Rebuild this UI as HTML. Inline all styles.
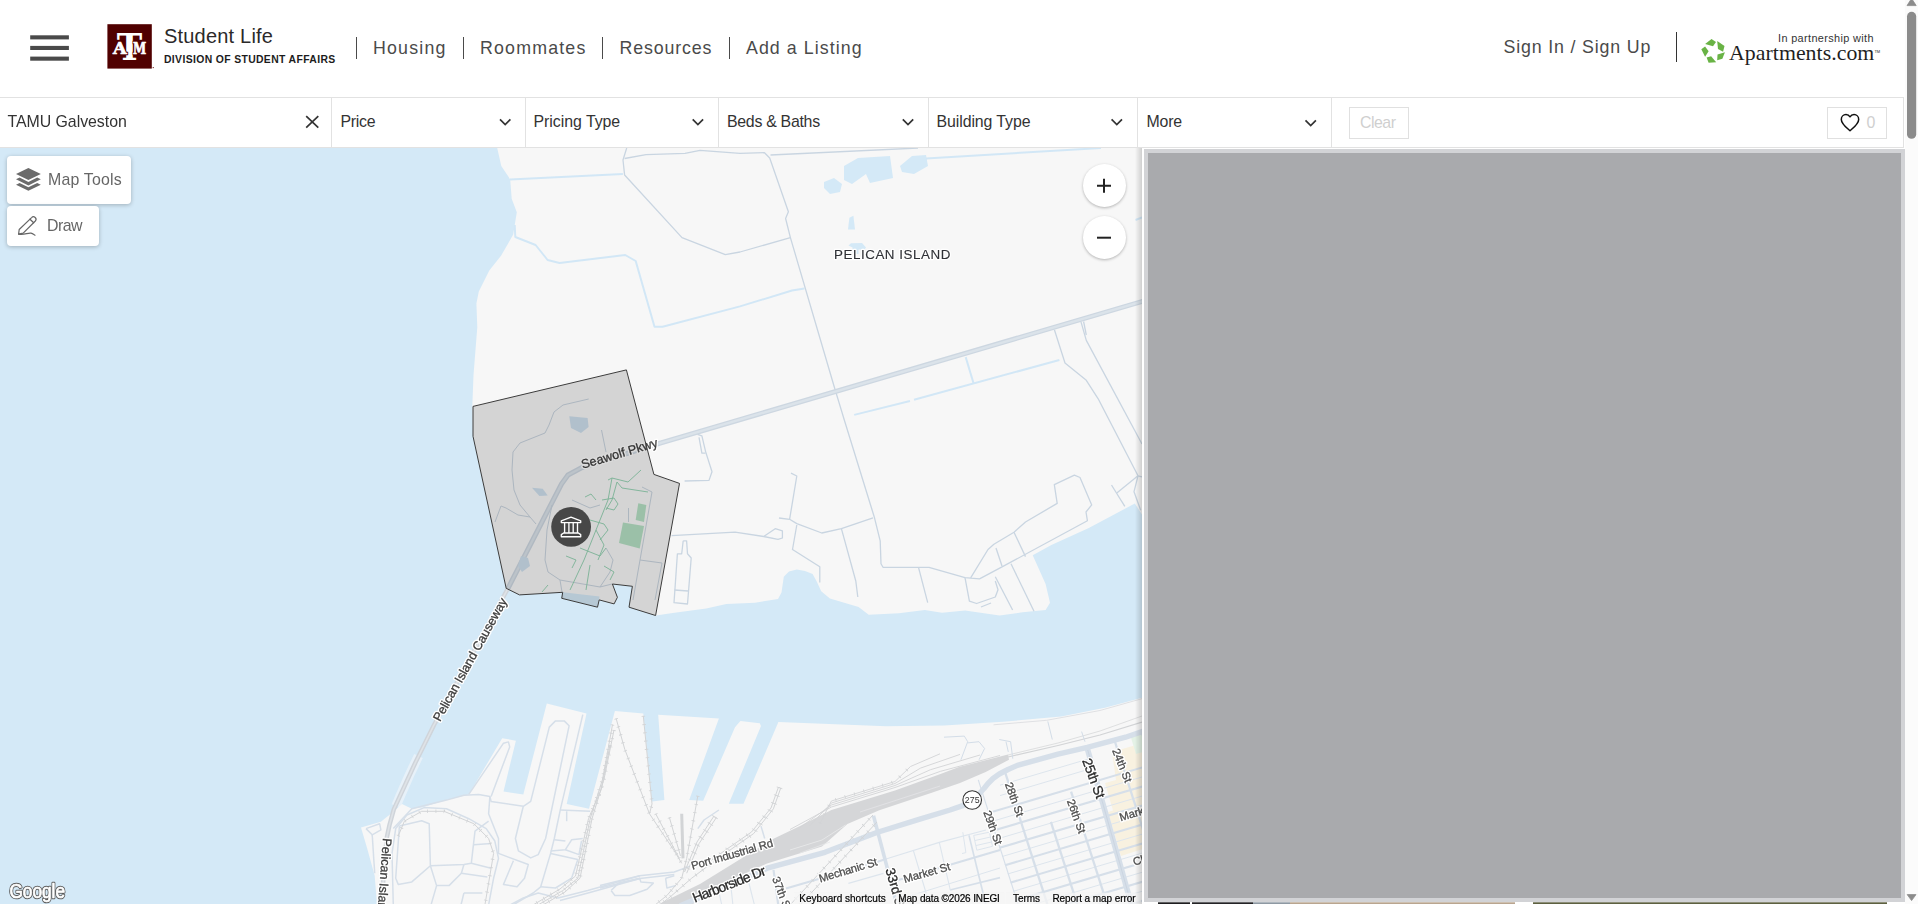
<!DOCTYPE html>
<html lang="en">
<head>
<meta charset="utf-8">
<title>Off Campus Housing - TAMU Galveston</title>
<style>
*{box-sizing:border-box;margin:0;padding:0}
html,body{width:1918px;height:904px;overflow:hidden;background:#fff;font-family:"Liberation Sans",Arial,sans-serif;color:#333}
#page{position:relative;width:1918px;height:904px;overflow:hidden;background:#fff}
.abs{position:absolute}
.t{position:absolute;white-space:nowrap;line-height:1}
/* header */
#hdrline{left:0;top:97px;width:1904px;height:1px;background:#e2e2e2}
#sl{left:164px;top:26.1px;font-size:20px;color:#2b2929;letter-spacing:0.2px}
#dsa{left:164px;top:54.8px;font-size:10.4px;color:#1c1c1c;font-weight:bold;letter-spacing:0.36px}
.nav{top:40.1px;font-size:17.8px;color:#4a4a4a}
.vsep{top:37px;width:1px;height:22px;background:#4a4a4a}
/* filter bar */
#fline{left:0;top:147px;width:1904px;height:1px;background:#e2e2e2}
.fsep{top:98px;width:1px;height:49px;background:#e2e2e2}
.flab{top:113.6px;font-size:15.9px;color:#333}
.fbtn{top:107px;height:32px;border:1px solid #e0e0e0;background:#fff}
/* map */
#map{left:0;top:148px;width:1142px;height:756px;background:#d4e9f7;overflow:hidden}
#map svg{will-change:transform}
#mapshade{left:1135px;top:148px;width:7px;height:756px;background:linear-gradient(to right,rgba(0,0,0,0),rgba(0,0,0,0.16))}
#panel{left:1144px;top:149px;width:761px;height:753px;background:#a9aaad;border:4px solid #d2d3d6}
#sb{left:1905px;top:0;width:13px;height:904px;background:#fbfbfb}
.mbtn{background:#fff;border-radius:4px;box-shadow:0 1px 4px rgba(0,0,0,.25)}
.mtxt{font-size:15.9px;color:#666;will-change:transform}
.zbtn{width:43px;height:43px;border-radius:50%;background:#fff;box-shadow:0 1px 3px rgba(0,0,0,.28)}
</style>
</head>
<body>
<div id="page">
<div id="map" class="abs">
<svg width="1142" height="756" viewBox="0 148 1142 756" style="position:absolute;left:0;top:0;display:block" font-family="'Liberation Sans',Arial,sans-serif">
<rect x="0" y="148" width="1142" height="756" fill="#d4e9f7"/>
<path d="M497.0,147.0 L501.3,166.0 L510.2,179.4 L511.7,198.8 L516.8,212.2 L513.2,234.6 L501.2,255.6 L489.3,270.5 L478.8,291.4 L476.4,303.4 L477.3,327.3 L473.5,375.0 L472.3,406.4 L473.0,436.3 L506.2,588.3 L519.5,594.9 L562.7,592.3 L561.7,598.3 L597.5,607.2 L599.2,599.9 L614.1,603.9 L617.4,597.3 L612.4,584.0 L632.4,586.3 L629.0,607.2 L655.8,615.6 L674.5,612.8 L706.2,608.4 L726.3,604.1 L755.0,602.7 L778.0,599.0 L781.5,592.6 L783.8,576.8 L789.0,571.5 L796.8,569.6 L805.0,571.0 L812.6,573.9 L817.0,582.0 L821.2,591.2 L829.9,598.4 L858.6,607.0 L868.7,614.8 L898.9,613.3 L924.8,609.9 L942.0,612.7 L965.0,610.4 L999.6,615.6 L1022.6,612.2 L1045.6,609.9 L1050.0,602.7 L1045.6,584.0 L1032.7,555.2 L1051.4,545.1 L1088.8,527.9 L1134.8,503.4 L1143.0,516.0 L1143.0,147.0Z" fill="#f7f7f7"/>
<path d="M418.5,756.0 L409.0,776.0 L400.2,796.0 L396.0,806.0" fill="none" stroke="#e7f1f9" stroke-width="9.5"/>
<path d="M361.0,827.4 L380.9,821.7 L393.0,812.0 L402.0,803.9 L411.8,808.8 L421.7,807.6 L446.5,800.1 L468.8,794.4 L502.2,738.2 L515.9,740.7 L503.5,791.5 L523.3,794.4 L546.8,703.5 L586.5,713.4 L566.7,803.9 L589.0,808.8 L614.9,711.0 L643.3,713.4 L652.0,801.4 L664.4,800.1 L658.2,714.7 L718.9,718.4 L689.2,800.1 L703.2,800.7 L735.0,727.2 L740.4,721.0 L759.8,723.3 L761.0,725.9 L728.8,803.8 L743.5,803.8 L778.4,722.1 L886.0,726.2 L944.4,725.6 L1002.9,721.8 L1061.3,716.5 L1105.0,707.8 L1143.0,697.5 L1143.0,905.0 L377.0,905.0 L374.7,875.7 L367.2,848.4Z" fill="#f7f7f7"/>
<path d="M844.0,166.0 L858.0,158.0 L890.0,156.0 L893.0,178.0 L870.0,183.0 L866.0,174.0 L852.0,184.0 L844.0,180.0Z" fill="#d4e9f7"/>
<path d="M824.0,182.0 L834.0,178.0 L842.0,184.0 L840.0,192.0 L830.0,194.0 L824.0,188.0Z" fill="#d4e9f7"/>
<path d="M900.0,166.0 L912.0,156.0 L926.0,155.0 L928.0,166.0 L914.0,174.0 L902.0,172.0Z" fill="#d4e9f7"/>
<path d="M849.4,217.7 L853.4,215.7 L855.0,229.6 L848.0,229.6Z" fill="#d4e9f7"/>
<path d="M848.5,245.5 L851.0,243.3 L862.0,243.0 L866.0,247.5 L864.5,249.5 L858.5,249.5 L858.5,254.0 L853.0,254.0 L852.5,247.5Z" fill="#d4e9f7"/>
<path d="M510.0,179.4 L622.9,174.0" fill="none" stroke="#d2e7f6" stroke-width="2" stroke-linejoin="round"/>
<path d="M514.7,225.0 L515.3,237.0 L535.6,245.0 L547.6,260.0 L559.5,263.0 L625.2,255.0 L635.7,261.0 L654.5,326.7 L662.6,326.7 L740.0,306.4 L792.0,290.5 L804.4,288.6" fill="none" stroke="#d2e7f6" stroke-width="2" stroke-linejoin="round"/>
<path d="M854.2,414.9 L910.0,401.0" fill="none" stroke="#d2e7f6" stroke-width="2" stroke-linejoin="round"/>
<path d="M914.0,399.8 L1059.4,360.0" fill="none" stroke="#d2e7f6" stroke-width="2" stroke-linejoin="round"/>
<path d="M965.7,357.1 L973.7,383.8" fill="none" stroke="#d2e7f6" stroke-width="2" stroke-linejoin="round"/>
<path d="M926.0,158.5 L1101.0,148.0" fill="none" stroke="#d2e7f6" stroke-width="2" stroke-linejoin="round"/>
<path d="M1135.5,220.0 L1142.0,217.5" fill="none" stroke="#d2e7f6" stroke-width="2" stroke-linejoin="round"/>
<path d="M626.7,148.0 L623.0,160.0 L624.6,175.0 L682.0,237.6 L725.3,254.7 L740.0,252.0 L790.4,237.6" fill="none" stroke="#c9d5e1" stroke-width="1.3" stroke-linejoin="round"/>
<path d="M624.6,158.5 L646.0,154.6 L685.0,153.4 L700.0,150.4 L740.0,153.4 L764.5,152.7 L769.7,158.0 L788.4,211.7 L785.6,218.5 L790.4,237.6 L834.3,387.0 L844.3,420.0 L874.5,517.8 L880.2,540.8 L881.0,563.8 L883.0,567.3 L929.0,567.3 L965.0,577.7 L979.5,578.8 L1002.5,566.7 L1087.4,520.7 L1086.0,512.0 L1091.7,504.9 L1080.0,477.5 L1074.4,475.2 L1054.3,484.7 L1057.2,503.4 L1025.5,522.0 L1014.0,532.2 L993.9,544.3 L988.0,549.5 L970.8,577.7" fill="none" stroke="#c9d5e1" stroke-width="1.3" stroke-linejoin="round"/>
<path d="M770.5,155.0 L918.0,148.0" fill="none" stroke="#c9d5e1" stroke-width="1.3" stroke-linejoin="round"/>
<path d="M873.0,517.8 L841.4,528.7 L821.8,533.0 L796.8,523.6 L789.6,519.3 L796.8,476.0 L791.0,473.2" fill="none" stroke="#c9d5e1" stroke-width="1.3" stroke-linejoin="round"/>
<path d="M779.0,518.0 L789.6,519.3" fill="none" stroke="#c9d5e1" stroke-width="1.3" stroke-linejoin="round"/>
<path d="M796.8,525.0 L792.5,549.5 L819.8,566.7 L819.8,582.5" fill="none" stroke="#c9d5e1" stroke-width="1.3" stroke-linejoin="round"/>
<path d="M841.4,528.7 L855.8,581.0 L857.8,597.0" fill="none" stroke="#c9d5e1" stroke-width="1.3" stroke-linejoin="round"/>
<path d="M918.5,567.3 L927.7,602.7" fill="none" stroke="#c9d5e1" stroke-width="1.3" stroke-linejoin="round"/>
<path d="M671.6,535.6 L735.0,532.2 L763.7,536.5 L775.2,528.7 L782.4,530.8 L782.4,538.0 L778.0,539.4 L763.7,536.5" fill="none" stroke="#c9d5e1" stroke-width="1.3" stroke-linejoin="round"/>
<path d="M697.5,434.4 L701.9,435.8 L705.6,451.6 L712.0,471.8 L709.0,480.4 L684.6,481.0" fill="none" stroke="#c9d5e1" stroke-width="1.3" stroke-linejoin="round"/>
<path d="M699.0,437.3 L701.9,453.1 L705.6,453.1" fill="none" stroke="#c9d5e1" stroke-width="1.3" stroke-linejoin="round"/>
<path d="M683.2,540.8 L686.6,540.8 L687.5,553.8 L691.2,558.0 L687.5,604.0 L674.0,602.7 L677.4,553.8 L681.7,553.8 L683.2,540.8" fill="none" stroke="#c9d5e1" stroke-width="1.3" stroke-linejoin="round"/>
<path d="M674.5,590.0 L688.0,591.0" fill="none" stroke="#c9d5e1" stroke-width="1.3" stroke-linejoin="round"/>
<path d="M1054.4,329.8 L1065.0,363.0 L1086.3,380.3 L1098.2,398.8 L1138.0,475.8" fill="none" stroke="#c9d5e1" stroke-width="1.3" stroke-linejoin="round"/>
<path d="M1081.0,321.9 L1086.3,340.4 L1142.0,444.0" fill="none" stroke="#c9d5e1" stroke-width="1.3" stroke-linejoin="round"/>
<path d="M1083.6,321.5 L1086.3,335.0" fill="none" stroke="#c9d5e1" stroke-width="1.3" stroke-linejoin="round"/>
<path d="M1138.0,475.8 L1134.0,491.7 L1140.7,510.3" fill="none" stroke="#c9d5e1" stroke-width="1.3" stroke-linejoin="round"/>
<path d="M1138.0,475.8 L1116.8,493.0" fill="none" stroke="#c9d5e1" stroke-width="1.3" stroke-linejoin="round"/>
<path d="M1111.5,485.0 L1124.8,506.3" fill="none" stroke="#c9d5e1" stroke-width="1.3" stroke-linejoin="round"/>
<path d="M1138.0,475.8 L1142.0,477.0" fill="none" stroke="#c9d5e1" stroke-width="1.3" stroke-linejoin="round"/>
<path d="M965.0,577.7 L969.4,601.2 L976.6,603.5 L995.3,597.0 L998.0,589.7 L995.3,581.0" fill="none" stroke="#c9d5e1" stroke-width="1.3" stroke-linejoin="round"/>
<path d="M981.0,607.0 L991.0,603.0" fill="none" stroke="#c9d5e1" stroke-width="1.3" stroke-linejoin="round"/>
<path d="M1011.0,563.8 L1034.0,611.3" fill="none" stroke="#c9d5e1" stroke-width="1.3" stroke-linejoin="round"/>
<path d="M995.3,576.8 L1012.6,610.0" fill="none" stroke="#c9d5e1" stroke-width="1.3" stroke-linejoin="round"/>
<path d="M1014.0,532.2 L1025.5,556.6" fill="none" stroke="#c9d5e1" stroke-width="1.3" stroke-linejoin="round"/>
<path d="M996.0,548.0 L1002.0,566.0" fill="none" stroke="#c9d5e1" stroke-width="1.3" stroke-linejoin="round"/>
<path d="M508.0,588.3 L543.0,520.0 L561.5,484.0 L568.0,475.0 L582.0,467.5 L661.0,442.8 L1143.0,301.2" fill="none" stroke="#cdd7e1" stroke-width="5" stroke-linejoin="round"/>
<path d="M508.0,588.3 L543.0,520.0 L561.5,484.0 L568.0,475.0 L582.0,467.5 L661.0,442.8 L1143.0,301.2" fill="none" stroke="#dbe3ea" stroke-width="2.4" stroke-linejoin="round"/>
<path d="M508.0,588.3 L433.9,725.2 L415.3,762.8 L393.8,809.4 L389.5,825.0 L386.7,838.0 L383.5,875.0 L382.0,905.0" fill="none" stroke="#cfd4da" stroke-width="4.5" stroke-linejoin="round"/>
<path d="M508.0,588.3 L433.9,725.2 L415.3,762.8 L393.8,809.4 L389.5,825.0 L386.7,838.0 L383.5,875.0 L382.0,905.0" fill="none" stroke="#dfe3e7" stroke-width="1.6" stroke-linejoin="round"/>
<defs><clipPath id="gridclip"><path d="M977.7,780.0 L999.3,774.0 L1008.0,769.5 L1017.3,765.4 L1058.0,754.2 L1087.3,747.4 L1125.6,737.2 L1144.0,731.0 L1144.0,906.0 L1018.0,906.0Z"/></clipPath><clipPath id="southclip"><path d="M679.8,906.0 L722.0,888.0 L767.3,868.2 L825.0,852.3 L876.8,832.5 L919.0,819.3 L950.0,810.0 L962.8,805.6 L972.0,800.0 L979.0,794.0 L984.0,788.5 L988.0,783.5 L993.0,778.5 L999.3,774.0 L1008.0,769.5 L1017.3,765.4 L1058.0,754.2 L1087.3,747.4 L1125.6,737.2 L1144.0,731.0 L1144.0,906.0Z"/></clipPath></defs>
<g clip-path="url(#gridclip)">
<path d="M1112,752 L1143,743 L1143,849 L1121,856 L1108,812 L1113,810.5 L1105,783 L1116,780 Z" fill="#f8f1e0"/>
<path d="M1128,728 L1143,723 L1143,752 L1136,754 Z" fill="#e4f2e6"/>
<path d="M960.0,821.4 L1143.0,767.2" fill="none" stroke="#d6dfe9" stroke-width="2.1" stroke-linejoin="round" stroke-linecap="butt" />
<path d="M960.0,830.9 L1143.0,776.7" fill="none" stroke="#dde5ed" stroke-width="1" stroke-linejoin="round" stroke-linecap="butt" />
<path d="M960.0,840.5 L1143.0,786.3" fill="none" stroke="#d6dfe9" stroke-width="2.1" stroke-linejoin="round" stroke-linecap="butt" />
<path d="M960.0,850.0 L1143.0,795.8" fill="none" stroke="#dde5ed" stroke-width="1" stroke-linejoin="round" stroke-linecap="butt" />
<path d="M960.0,859.5 L1143.0,805.3" fill="none" stroke="#d6dfe9" stroke-width="2.1" stroke-linejoin="round" stroke-linecap="butt" />
<path d="M960.0,869.0 L1143.0,814.8" fill="none" stroke="#dde5ed" stroke-width="1" stroke-linejoin="round" stroke-linecap="butt" />
<path d="M960.0,878.6 L1143.0,824.4" fill="none" stroke="#d6dfe9" stroke-width="2.1" stroke-linejoin="round" stroke-linecap="butt" />
<path d="M960.0,888.1 L1143.0,833.9" fill="none" stroke="#dde5ed" stroke-width="1" stroke-linejoin="round" stroke-linecap="butt" />
<path d="M960.0,897.6 L1143.0,843.4" fill="none" stroke="#d6dfe9" stroke-width="2.1" stroke-linejoin="round" stroke-linecap="butt" />
<path d="M960.0,907.1 L1143.0,852.9" fill="none" stroke="#dde5ed" stroke-width="1" stroke-linejoin="round" stroke-linecap="butt" />
<path d="M960.0,916.7 L1143.0,862.5" fill="none" stroke="#d6dfe9" stroke-width="2.1" stroke-linejoin="round" stroke-linecap="butt" />
<path d="M960.0,926.2 L1143.0,872.0" fill="none" stroke="#dde5ed" stroke-width="1" stroke-linejoin="round" stroke-linecap="butt" />
<path d="M960.0,935.7 L1143.0,881.5" fill="none" stroke="#d6dfe9" stroke-width="2.1" stroke-linejoin="round" stroke-linecap="butt" />
<path d="M960.0,945.2 L1143.0,891.0" fill="none" stroke="#dde5ed" stroke-width="1" stroke-linejoin="round" stroke-linecap="butt" />
<path d="M960.0,954.8 L1143.0,900.6" fill="none" stroke="#d6dfe9" stroke-width="2.1" stroke-linejoin="round" stroke-linecap="butt" />
<path d="M960.0,964.3 L1143.0,910.1" fill="none" stroke="#dde5ed" stroke-width="1" stroke-linejoin="round" stroke-linecap="butt" />
<path d="M960.0,973.8 L1143.0,919.6" fill="none" stroke="#d6dfe9" stroke-width="2.1" stroke-linejoin="round" stroke-linecap="butt" />
<path d="M960.0,983.3 L1143.0,929.1" fill="none" stroke="#dde5ed" stroke-width="1" stroke-linejoin="round" stroke-linecap="butt" />
<path d="M1000.0,785.2 L1090.0,758.5" fill="none" stroke="#dde5ed" stroke-width="1" stroke-linejoin="round" stroke-linecap="butt" />
<path d="M1000.0,795.6 L1090.0,768.9" fill="none" stroke="#dde5ed" stroke-width="1" stroke-linejoin="round" stroke-linecap="butt" />
<path d="M1161.4,700.0 L1228.6,910.0" fill="none" stroke="#d6dfe9" stroke-width="2.3" stroke-linejoin="round" stroke-linecap="butt" />
<path d="M1131.5,700.0 L1198.7,910.0" fill="none" stroke="#d6dfe9" stroke-width="2.3" stroke-linejoin="round" stroke-linecap="butt" />
<path d="M1101.6,700.0 L1168.8,910.0" fill="none" stroke="#d6dfe9" stroke-width="2.3" stroke-linejoin="round" stroke-linecap="butt" />
<path d="M1071.1,791.6 L1109.0,910.0" fill="none" stroke="#d6dfe9" stroke-width="2.3" stroke-linejoin="round" stroke-linecap="butt" />
<path d="M1050.9,821.8 L1079.1,910.0" fill="none" stroke="#d6dfe9" stroke-width="2.3" stroke-linejoin="round" stroke-linecap="butt" />
<path d="M982.0,700.0 L1049.2,910.0" fill="none" stroke="#d6dfe9" stroke-width="2.3" stroke-linejoin="round" stroke-linecap="butt" />
<path d="M952.1,700.0 L1019.3,910.0" fill="none" stroke="#d6dfe9" stroke-width="2.3" stroke-linejoin="round" stroke-linecap="butt" />
</g>
<g clip-path="url(#southclip)">
<path d="M786.0,888.5 L876.8,862.0 L886.0,859.0" fill="none" stroke="#d6dfe9" stroke-width="2.1" stroke-linejoin="round" stroke-linecap="butt" />
<path d="M886.0,859.0 L939.3,842.4 L986.0,830.0" fill="none" stroke="#dde5ed" stroke-width="1.1" stroke-linejoin="round" stroke-linecap="butt" />
<path d="M898.4,880.0 L1000.0,849.9" fill="none" stroke="#d6dfe9" stroke-width="2.1" stroke-linejoin="round" stroke-linecap="butt" />
<path d="M848.4,883.4 L883.4,873.4" fill="none" stroke="#dde5ed" stroke-width="1.1" stroke-linejoin="round" stroke-linecap="butt" />
<path d="M950.0,890.0 L1000.0,877.6" fill="none" stroke="#d6dfe9" stroke-width="1.6" stroke-linejoin="round" stroke-linecap="butt" />
<path d="M900.0,899.0 L1000.0,868.0" fill="none" stroke="#dde5ed" stroke-width="1" stroke-linejoin="round" stroke-linecap="butt" />
<path d="M773.5,869.8 L778.4,906.0" fill="none" stroke="#d6dfe9" stroke-width="2.2" stroke-linejoin="round" stroke-linecap="butt" />
<path d="M748.5,881.5 L754.7,906.0" fill="none" stroke="#dde5ed" stroke-width="1.1" stroke-linejoin="round" stroke-linecap="butt" />
<path d="M718.8,891.7 L722.0,906.0" fill="none" stroke="#dde5ed" stroke-width="1.1" stroke-linejoin="round" stroke-linecap="butt" />
<path d="M731.3,890.0 L733.0,906.0" fill="none" stroke="#dde5ed" stroke-width="1.1" stroke-linejoin="round" stroke-linecap="butt" />
<path d="M913.5,851.0 L925.2,890.0 L930.0,906.0" fill="none" stroke="#dde5ed" stroke-width="1.1" stroke-linejoin="round" stroke-linecap="butt" />
<path d="M939.3,842.4 L950.3,890.0" fill="none" stroke="#dde5ed" stroke-width="1.1" stroke-linejoin="round" stroke-linecap="butt" />
<path d="M969.0,835.4 L986.2,906.0" fill="none" stroke="#d6dfe9" stroke-width="1.7" stroke-linejoin="round" stroke-linecap="butt" />
<path d="M962.8,832.2 L965.9,852.6 L962.0,853.5" fill="none" stroke="#dde5ed" stroke-width="1" stroke-linejoin="round" stroke-linecap="butt" />
<path d="M973.7,835.4 L989.4,832.2 L992.5,846.3 L976.8,850.2 L973.7,835.4" fill="none" stroke="#dde5ed" stroke-width="1" stroke-linejoin="round" stroke-linecap="butt" />
<path d="M975.0,840.5 L990.5,837.0" fill="none" stroke="#dde5ed" stroke-width="1" stroke-linejoin="round" stroke-linecap="butt" />
<path d="M976.0,845.5 L991.5,842.0" fill="none" stroke="#dde5ed" stroke-width="1" stroke-linejoin="round" stroke-linecap="butt" />
</g>
<path d="M1087.3,748.5 L1131.5,905.0" fill="none" stroke="#d6dfe9" stroke-width="5.6" stroke-linejoin="round" stroke-linecap="butt" />
<path d="M1087.3,748.5 L1131.5,905.0" fill="none" stroke="#c5d0dc" stroke-width="0.7" stroke-linejoin="round" stroke-linecap="butt" />
<path d="M873.5,815.7 L897.0,905.0" fill="none" stroke="#d6dfe9" stroke-width="3.6" stroke-linejoin="round" stroke-linecap="butt" />
<path d="M655.0,906.0 L700.0,884.0 L773.0,839.0 L800.0,826.0 L831.4,810.0 L895.0,790.5 L940.5,774.0 L959.0,767.0 L1008.0,754.5 L1009.0,759.8 L985.7,772.0 L960.0,783.0 L932.5,792.5 L879.3,810.3 L847.4,824.0 L822.0,846.5 L767.0,863.5 L722.0,884.0 L690.0,906.0Z" fill="#d5d6d8"/>
<path d="M790.0,829.5 L831.4,807.0 L895.0,787.5 L940.5,771.3 L1000.0,755.5" fill="none" stroke="#d2d4d6" stroke-width="0.9" stroke-linejoin="round" stroke-linecap="butt" />
<path d="M800.0,827.5 L831.4,805.0 L895.0,785.5 L930.5,769.7 L980.0,755.0" fill="none" stroke="#d2d4d6" stroke-width="0.9" stroke-linejoin="round" stroke-linecap="butt" />
<path d="M810.0,825.5 L831.4,803.0 L895.0,783.5 L920.5,768.1 L960.0,754.4" fill="none" stroke="#d2d4d6" stroke-width="0.9" stroke-linejoin="round" stroke-linecap="butt" />
<path d="M820.0,823.5 L831.4,801.0 L895.0,781.5 L910.5,766.5 L940.0,753.8" fill="none" stroke="#d2d4d6" stroke-width="0.9" stroke-linejoin="round" stroke-linecap="butt" />
<path d="M820.0,823.5 L831.4,801.0 L895.0,781.5 L910.5,766.5" fill="none" stroke="#d2d4d6" stroke-width="3.4" stroke-linejoin="round" stroke-linecap="butt" stroke-dasharray="0.8 9"/>
<path d="M790.0,850.0 L822.0,840.0 L845.5,825.0" fill="none" stroke="#e6e7e8" stroke-width="1" stroke-linejoin="round" stroke-linecap="butt" />
<path d="M800.0,853.0 L830.0,842.0" fill="none" stroke="#e6e7e8" stroke-width="0.8" stroke-linejoin="round" stroke-linecap="butt" />
<path d="M860.0,812.0 L900.0,799.0 L940.0,786.0" fill="none" stroke="#e4e5e7" stroke-width="0.8" stroke-linejoin="round" stroke-linecap="butt" />
<path d="M1008.0,757.0 L1058.0,745.5 L1100.0,735.0 L1142.0,722.0" fill="none" stroke="#d2d4d6" stroke-width="1.2" stroke-linejoin="round" stroke-linecap="butt" />
<path d="M1008.0,755.0 L1058.0,743.0 L1100.0,731.0 L1142.0,716.0" fill="none" stroke="#d2d4d6" stroke-width="0.7" stroke-linejoin="round" stroke-linecap="butt" />
<path d="M679.8,906.0 L722.0,888.0 L767.3,868.2 L825.0,852.3 L876.8,832.5 L919.0,819.3 L950.0,810.0 L962.8,805.6 L972.0,800.0 L979.0,794.0 L984.0,788.5 L988.0,783.5 L993.0,778.5 L999.3,774.0 L1008.0,769.5 L1017.3,765.4 L1058.0,754.2 L1087.3,747.4 L1125.6,737.2 L1144.0,731.0" fill="none" stroke="#d6dfe9" stroke-width="5.4" stroke-linejoin="round" stroke-linecap="butt" />
<path d="M393.3,905.0 L392.0,853.4 L395.7,828.6 L406.9,815.0 L424.2,807.6 L446.5,808.8 L468.8,818.7 L486.2,828.6 L494.8,841.0 L498.5,858.4 L493.6,878.2 L488.6,905.0" fill="none" stroke="#d6dfe9" stroke-width="1.5" stroke-linejoin="round" stroke-linecap="butt" />
<path d="M393.3,828.6 L411.8,808.8 L446.5,800.1 L463.9,795.2 L478.7,794.4 L489.9,796.4 L491.1,801.4 L523.3,806.3 L530.7,801.4 L549.3,727.1 L555.5,720.9 L564.2,720.9 L569.1,725.8 L545.6,838.5 L538.2,854.6 L530.7,857.9 L518.4,850.9 L515.4,838.5 L523.3,806.3" fill="none" stroke="#d6dfe9" stroke-width="1.5" stroke-linejoin="round" stroke-linecap="butt" />
<path d="M468.8,794.4 L503.5,743.2 L508.4,741.9 L509.7,746.9 L491.1,796.4" fill="none" stroke="#d6dfe9" stroke-width="1.5" stroke-linejoin="round" stroke-linecap="butt" />
<path d="M489.9,796.4 L488.6,813.8 L498.5,838.5 L498.5,853.4 L528.3,864.5 L524.5,878.2 L517.1,886.8 L503.5,884.4 L513.4,860.8" fill="none" stroke="#d6dfe9" stroke-width="1.5" stroke-linejoin="round" stroke-linecap="butt" />
<path d="M582.8,714.7 L560.5,808.8 L554.3,838.5 L550.6,853.4 L540.7,886.8 L533.2,893.0 L513.0,905.0" fill="none" stroke="#d6dfe9" stroke-width="1.5" stroke-linejoin="round" stroke-linecap="butt" />
<path d="M560.5,810.0 L590.2,811.3" fill="none" stroke="#d6dfe9" stroke-width="1.5" stroke-linejoin="round" stroke-linecap="butt" />
<path d="M566.7,811.3 L566.7,821.2" fill="none" stroke="#d6dfe9" stroke-width="1.5" stroke-linejoin="round" stroke-linecap="butt" />
<path d="M554.3,839.8 L565.4,841.0" fill="none" stroke="#d6dfe9" stroke-width="1.5" stroke-linejoin="round" stroke-linecap="butt" />
<path d="M550.6,850.9 L565.4,849.7 L571.6,839.8 L582.8,838.5" fill="none" stroke="#d6dfe9" stroke-width="1.5" stroke-linejoin="round" stroke-linecap="butt" />
<path d="M565.4,849.7 L579.0,854.6 L581.5,841.0" fill="none" stroke="#d6dfe9" stroke-width="1.5" stroke-linejoin="round" stroke-linecap="butt" />
<path d="M550.6,853.4 L577.8,859.6 L571.6,878.2 L555.5,888.0 L540.7,886.8" fill="none" stroke="#d6dfe9" stroke-width="1.5" stroke-linejoin="round" stroke-linecap="butt" />
<path d="M399.4,826.1 L421.7,820.7 L429.2,823.7 L430.4,865.8 L411.8,881.9 L398.2,884.4 L395.7,878.2 L399.4,826.1" fill="none" stroke="#d6dfe9" stroke-width="1.5" stroke-linejoin="round" stroke-linecap="butt" />
<path d="M430.4,865.8 L436.6,885.6 L431.0,905.0" fill="none" stroke="#d6dfe9" stroke-width="1.5" stroke-linejoin="round" stroke-linecap="butt" />
<path d="M430.4,865.8 L463.9,864.5 L471.3,863.3 L475.0,831.1 L488.6,821.2" fill="none" stroke="#d6dfe9" stroke-width="1.5" stroke-linejoin="round" stroke-linecap="butt" />
<path d="M473.8,844.7 L491.1,843.5" fill="none" stroke="#d6dfe9" stroke-width="1.5" stroke-linejoin="round" stroke-linecap="butt" />
<path d="M471.3,863.3 L491.1,868.3" fill="none" stroke="#d6dfe9" stroke-width="1.5" stroke-linejoin="round" stroke-linecap="butt" />
<path d="M463.9,864.5 L461.4,873.2 L487.4,876.9" fill="none" stroke="#d6dfe9" stroke-width="1.5" stroke-linejoin="round" stroke-linecap="butt" />
<path d="M436.6,885.6 L449.0,885.6 L461.4,873.2" fill="none" stroke="#d6dfe9" stroke-width="1.5" stroke-linejoin="round" stroke-linecap="butt" />
<path d="M463.9,893.0 L482.4,893.0" fill="none" stroke="#d6dfe9" stroke-width="1.5" stroke-linejoin="round" stroke-linecap="butt" />
<path d="M463.9,893.0 L461.0,905.0" fill="none" stroke="#d6dfe9" stroke-width="1.5" stroke-linejoin="round" stroke-linecap="butt" />
<path d="M366.0,828.6 L379.6,823.7 L380.9,829.9 L372.2,834.8 L366.0,828.6" fill="none" stroke="#d6dfe9" stroke-width="1.5" stroke-linejoin="round" stroke-linecap="butt" />
<path d="M372.2,834.8 L374.7,873.2" fill="none" stroke="#d6dfe9" stroke-width="1.5" stroke-linejoin="round" stroke-linecap="butt" />
<path d="M640.0,875.7 L587.7,890.5 L558.0,898.0 L538.2,893.0 L523.3,898.0 L510.0,905.0" fill="none" stroke="#d6dfe9" stroke-width="1.5" stroke-linejoin="round" stroke-linecap="butt" />
<path d="M640.0,878.5 L588.0,893.0 L560.0,900.5" fill="none" stroke="#d6dfe9" stroke-width="1.5" stroke-linejoin="round" stroke-linecap="butt" />
<path d="M600.0,885.6 L639.6,875.7 L674.3,872.0 L689.4,866.4" fill="none" stroke="#d6dfe9" stroke-width="1.5" stroke-linejoin="round" stroke-linecap="butt" />
<path d="M600.0,888.0 L640.0,878.5 L674.3,874.5" fill="none" stroke="#d6dfe9" stroke-width="1.5" stroke-linejoin="round" stroke-linecap="butt" />
<path d="M611.1,890.5 L618.6,883.1 L639.6,878.2 L640.9,881.9 L653.3,883.1 L647.1,889.3 L629.7,895.5 L614.9,895.5 L611.1,890.5" fill="none" stroke="#d6dfe9" stroke-width="1.5" stroke-linejoin="round" stroke-linecap="butt" />
<path d="M665.6,878.2 L674.3,875.7" fill="none" stroke="#d6dfe9" stroke-width="1.5" stroke-linejoin="round" stroke-linecap="butt" />
<path d="M665.6,878.2 L666.9,888.0 L676.0,885.5" fill="none" stroke="#d6dfe9" stroke-width="1.5" stroke-linejoin="round" stroke-linecap="butt" />
<path d="M718.9,810.0 L704.0,820.0 L697.8,828.6" fill="none" stroke="#d6dfe9" stroke-width="1.5" stroke-linejoin="round" stroke-linecap="butt" />
<path d="M761.0,826.1 L764.7,838.5" fill="none" stroke="#d6dfe9" stroke-width="1.5" stroke-linejoin="round" stroke-linecap="butt" />
<path d="M398.2,836.0 L404.4,821.2 L421.7,811.3 L444.0,811.3 L473.8,823.7 L488.6,838.5 L493.6,853.4 L484.9,905.0" fill="none" stroke="#d2d4d6" stroke-width="1" stroke-linejoin="round" stroke-linecap="butt" />
<path d="M398.2,836.0 L404.4,821.2 L421.7,811.3 L444.0,811.3 L473.8,823.7 L488.6,838.5 L493.6,853.4 L484.9,905.0" fill="none" stroke="#d2d4d6" stroke-width="3.6" stroke-linejoin="round" stroke-linecap="butt" stroke-dasharray="0.8 7.5"/>
<path d="M612.5,724.6 L602.6,779.1 L590.2,818.7 L577.8,878.2 L562.9,890.5 L538.0,905.0" fill="none" stroke="#d2d4d6" stroke-width="1" stroke-linejoin="round" stroke-linecap="butt" />
<path d="M612.5,724.6 L602.6,779.1 L590.2,818.7 L577.8,878.2 L562.9,890.5 L538.0,905.0" fill="none" stroke="#d2d4d6" stroke-width="3.6" stroke-linejoin="round" stroke-linecap="butt" stroke-dasharray="0.8 7.5"/>
<path d="M614.0,730.0 L604.0,779.1 L592.0,818.7 L580.0,878.2 L565.0,892.0 L543.0,905.0" fill="none" stroke="#d2d4d6" stroke-width="1" stroke-linejoin="round" stroke-linecap="butt" />
<path d="M614.0,730.0 L604.0,779.1 L592.0,818.7 L580.0,878.2 L565.0,892.0 L543.0,905.0" fill="none" stroke="#d2d4d6" stroke-width="3.6" stroke-linejoin="round" stroke-linecap="butt" stroke-dasharray="0.8 7.5"/>
<path d="M610.0,745.0 L601.0,790.0 L588.5,818.7 L575.5,876.0 L560.0,889.0 L533.0,905.0" fill="none" stroke="#d2d4d6" stroke-width="1" stroke-linejoin="round" stroke-linecap="butt" />
<path d="M610.0,745.0 L601.0,790.0 L588.5,818.7 L575.5,876.0 L560.0,889.0 L533.0,905.0" fill="none" stroke="#d2d4d6" stroke-width="3.6" stroke-linejoin="round" stroke-linecap="butt" stroke-dasharray="0.8 7.5"/>
<path d="M616.1,718.4 L624.8,749.4 L649.5,813.8 L674.3,850.9 L681.7,863.3" fill="none" stroke="#d2d4d6" stroke-width="1" stroke-linejoin="round" stroke-linecap="butt" />
<path d="M616.1,718.4 L624.8,749.4 L649.5,813.8 L674.3,850.9 L681.7,863.3" fill="none" stroke="#d2d4d6" stroke-width="3.6" stroke-linejoin="round" stroke-linecap="butt" stroke-dasharray="0.8 7.5"/>
<path d="M643.3,715.9 L652.0,803.9 L649.5,813.8" fill="none" stroke="#d2d4d6" stroke-width="1" stroke-linejoin="round" stroke-linecap="butt" />
<path d="M643.3,715.9 L652.0,803.9 L649.5,813.8" fill="none" stroke="#d2d4d6" stroke-width="3.6" stroke-linejoin="round" stroke-linecap="butt" stroke-dasharray="0.8 7.5"/>
<path d="M655.7,813.8 L679.3,858.4" fill="none" stroke="#d2d4d6" stroke-width="1" stroke-linejoin="round" stroke-linecap="butt" />
<path d="M655.7,813.8 L679.3,858.4" fill="none" stroke="#d2d4d6" stroke-width="3.6" stroke-linejoin="round" stroke-linecap="butt" stroke-dasharray="0.8 7.5"/>
<path d="M669.4,817.5 L680.5,855.9" fill="none" stroke="#d2d4d6" stroke-width="1" stroke-linejoin="round" stroke-linecap="butt" />
<path d="M669.4,817.5 L680.5,855.9" fill="none" stroke="#d2d4d6" stroke-width="3.6" stroke-linejoin="round" stroke-linecap="butt" stroke-dasharray="0.8 7.5"/>
<path d="M697.8,795.9 L686.7,858.4 L681.7,878.2 L666.9,895.5 L655.0,905.0" fill="none" stroke="#d2d4d6" stroke-width="1" stroke-linejoin="round" stroke-linecap="butt" />
<path d="M697.8,795.9 L686.7,858.4 L681.7,878.2 L666.9,895.5 L655.0,905.0" fill="none" stroke="#d2d4d6" stroke-width="3.6" stroke-linejoin="round" stroke-linecap="butt" stroke-dasharray="0.8 7.5"/>
<path d="M716.4,817.5 L699.1,843.5 L686.7,873.2" fill="none" stroke="#d2d4d6" stroke-width="1" stroke-linejoin="round" stroke-linecap="butt" />
<path d="M716.4,817.5 L699.1,843.5 L686.7,873.2" fill="none" stroke="#d2d4d6" stroke-width="3.6" stroke-linejoin="round" stroke-linecap="butt" stroke-dasharray="0.8 7.5"/>
<path d="M714.0,816.0 L697.0,842.0 L684.5,872.0" fill="none" stroke="#d2d4d6" stroke-width="1" stroke-linejoin="round" stroke-linecap="butt" />
<path d="M714.0,816.0 L697.0,842.0 L684.5,872.0" fill="none" stroke="#d2d4d6" stroke-width="3.6" stroke-linejoin="round" stroke-linecap="butt" stroke-dasharray="0.8 7.5"/>
<path d="M780.8,787.8 L773.4,808.8 L753.6,833.6 L728.8,850.9 L711.5,863.3 L691.7,878.2 L671.8,895.5 L660.0,905.0" fill="none" stroke="#d2d4d6" stroke-width="1" stroke-linejoin="round" stroke-linecap="butt" />
<path d="M780.8,787.8 L773.4,808.8 L753.6,833.6 L728.8,850.9 L711.5,863.3 L691.7,878.2 L671.8,895.5 L660.0,905.0" fill="none" stroke="#d2d4d6" stroke-width="3.6" stroke-linejoin="round" stroke-linecap="butt" stroke-dasharray="0.8 7.5"/>
<path d="M778.5,787.0 L771.0,808.0 L751.5,832.0 L727.0,849.0 L709.5,861.5" fill="none" stroke="#d2d4d6" stroke-width="1" stroke-linejoin="round" stroke-linecap="butt" />
<path d="M778.5,787.0 L771.0,808.0 L751.5,832.0 L727.0,849.0 L709.5,861.5" fill="none" stroke="#d2d4d6" stroke-width="3.6" stroke-linejoin="round" stroke-linecap="butt" stroke-dasharray="0.8 7.5"/>
<path d="M790.0,905.0 L873.0,815.0" fill="none" stroke="#d2d4d6" stroke-width="1" stroke-linejoin="round" stroke-linecap="butt" />
<path d="M790.0,905.0 L873.0,815.0" fill="none" stroke="#d2d4d6" stroke-width="3.6" stroke-linejoin="round" stroke-linecap="butt" stroke-dasharray="0.8 7.5"/>
<path d="M800.0,905.0 L877.0,822.0" fill="none" stroke="#d2d4d6" stroke-width="1" stroke-linejoin="round" stroke-linecap="butt" />
<path d="M800.0,905.0 L877.0,822.0" fill="none" stroke="#d2d4d6" stroke-width="3.6" stroke-linejoin="round" stroke-linecap="butt" stroke-dasharray="0.8 7.5"/>
<path d="M681.7,813.8 L683.0,858.4" fill="none" stroke="#d2d4d6" stroke-width="3" stroke-linejoin="round" stroke-linecap="butt" />
<path d="M944.0,737.2 L964.3,736.1 L967.7,741.7 L960.9,759.8" fill="none" stroke="#d3dde8" stroke-width="1" stroke-linejoin="round" stroke-linecap="butt" />
<path d="M967.7,742.9 L979.0,741.7 L984.6,748.5 L979.0,759.8" fill="none" stroke="#d3dde8" stroke-width="1" stroke-linejoin="round" stroke-linecap="butt" />
<path d="M999.3,739.5 L1010.6,741.7 L1012.8,758.7" fill="none" stroke="#d3dde8" stroke-width="1" stroke-linejoin="round" stroke-linecap="butt" />
<path d="M1006.0,741.7 L1008.3,751.9" fill="none" stroke="#d3dde8" stroke-width="1" stroke-linejoin="round" stroke-linecap="butt" />
<path d="M1047.8,721.4 L1052.3,739.5" fill="none" stroke="#d3dde8" stroke-width="1" stroke-linejoin="round" stroke-linecap="butt" />
<path d="M1081.6,731.6 L1085.0,741.7" fill="none" stroke="#d3dde8" stroke-width="1" stroke-linejoin="round" stroke-linecap="butt" />
<path d="M993.6,724.8 L1046.7,720.3 L1100.0,710.5 L1142.5,698.5" fill="none" stroke="#dcdee1" stroke-width="0.9" stroke-linejoin="round" stroke-linecap="butt" />
<path d="M638.3,503.3 L646.3,505.0 L644.0,521.9 L635.7,519.9Z" fill="#b5e0c4"/>
<path d="M623.0,522.6 L644.0,525.9 L639.7,548.5 L619.0,543.1Z" fill="#b5e0c4"/>
<path d="M569.3,416.3 L587.6,418.0 L588.6,427.0 L581.0,433.0 L571.0,428.0Z" fill="#cfe0ee"/>
<path d="M532.0,487.7 L542.7,488.7 L547.7,495.4 L539.4,496.0Z" fill="#cfe0ee"/>
<path d="M521.0,556.0 L528.0,558.0 L530.0,566.0 L522.0,572.0 L518.0,566.0Z" fill="#cfe0ee"/>
<path d="M562.7,592.3 L599.5,596.5 L597.5,607.2 L561.7,598.3Z" fill="#d4e9f7"/>
<path d="M588.7,399.0 L563.0,405.0 L554.0,412.0 L549.0,425.0 L545.0,433.0 L520.0,443.0 L513.0,452.0 L512.0,470.0 L514.0,490.0 L520.0,505.0 L530.0,517.0 L536.0,524.0" fill="none" stroke="#c9d4df" stroke-width="1" stroke-linejoin="round"/>
<path d="M495.0,522.0 L501.0,506.0 L506.0,508.0 L518.0,515.0 L530.0,517.0" fill="none" stroke="#c9d4df" stroke-width="1" stroke-linejoin="round"/>
<path d="M601.5,430.0 L606.0,452.0" fill="none" stroke="#c9d4df" stroke-width="1" stroke-linejoin="round"/>
<path d="M552.0,505.0 L547.0,530.0 L545.0,560.0 L548.0,572.0 L560.0,580.0 L600.0,587.0 L612.0,584.0" fill="none" stroke="#c9d4df" stroke-width="1" stroke-linejoin="round"/>
<path d="M572.0,500.0 L590.0,508.0 L600.0,505.0" fill="none" stroke="#c9d4df" stroke-width="1" stroke-linejoin="round"/>
<path d="M600.0,587.0 L610.0,572.0 L613.0,560.0 L606.0,548.0" fill="none" stroke="#c9d4df" stroke-width="1" stroke-linejoin="round"/>
<path d="M642.0,487.0 L652.0,492.0 L640.0,560.0 L633.0,600.0" fill="none" stroke="#c9d4df" stroke-width="1" stroke-linejoin="round"/>
<path d="M640.0,560.0 L662.0,563.0 L655.0,600.0" fill="none" stroke="#c9d4df" stroke-width="1" stroke-linejoin="round"/>
<path d="M628.5,508.0 L628.5,522.0" fill="none" stroke="#c9d4df" stroke-width="1" stroke-linejoin="round"/>
<path d="M560.0,580.0 L563.0,598.0" fill="none" stroke="#c9d4df" stroke-width="1" stroke-linejoin="round"/>
<path d="M608.0,480.0 L612.0,478.0 L628.0,482.0 L641.0,470.0" fill="none" stroke="#8fcfae" stroke-width="0.9" stroke-linejoin="round"/>
<path d="M612.0,478.0 L608.0,500.0 L596.0,530.0 L584.0,560.0 L570.0,590.0" fill="none" stroke="#8fcfae" stroke-width="0.9" stroke-linejoin="round"/>
<path d="M617.0,482.0 L622.0,488.0 L648.0,492.0" fill="none" stroke="#8fcfae" stroke-width="0.9" stroke-linejoin="round"/>
<path d="M617.0,482.0 L612.0,500.0 L606.0,510.0" fill="none" stroke="#8fcfae" stroke-width="0.9" stroke-linejoin="round"/>
<path d="M585.0,497.0 L591.0,494.0 L596.0,500.0" fill="none" stroke="#8fcfae" stroke-width="0.9" stroke-linejoin="round"/>
<path d="M602.0,500.0 L614.0,498.0 L618.0,504.0 L614.0,510.0 L606.0,508.0" fill="none" stroke="#8fcfae" stroke-width="0.9" stroke-linejoin="round"/>
<path d="M590.0,520.0 L604.0,524.0 L608.0,530.0 L600.0,540.0" fill="none" stroke="#8fcfae" stroke-width="0.9" stroke-linejoin="round"/>
<path d="M580.0,548.0 L600.0,556.0 L606.0,548.0" fill="none" stroke="#8fcfae" stroke-width="0.9" stroke-linejoin="round"/>
<path d="M596.0,530.0 L604.0,545.0 L598.0,560.0" fill="none" stroke="#8fcfae" stroke-width="0.9" stroke-linejoin="round"/>
<path d="M566.0,556.0 L576.0,560.0 L572.0,568.0" fill="none" stroke="#8fcfae" stroke-width="0.9" stroke-linejoin="round"/>
<path d="M590.0,565.0 L586.0,590.0" fill="none" stroke="#8fcfae" stroke-width="0.9" stroke-linejoin="round"/>
<path d="M604.0,566.0 L614.0,572.0 L610.0,580.0" fill="none" stroke="#8fcfae" stroke-width="0.9" stroke-linejoin="round"/>
<path d="M548.0,585.0 L542.0,592.0" fill="none" stroke="#8fcfae" stroke-width="0.9" stroke-linejoin="round"/>
<text x="619.5" y="453.8" transform="rotate(-16.5 619.5 453.8)" font-size="12.6" text-anchor="middle" dominant-baseline="central" letter-spacing="0" font-weight="normal" textLength="79.0" lengthAdjust="spacing"  fill="#fff" stroke="#fff" stroke-width="3" stroke-linejoin="round">Seawolf Pkwy</text>
<text x="619.5" y="453.8" transform="rotate(-16.5 619.5 453.8)" font-size="12.6" text-anchor="middle" dominant-baseline="central" letter-spacing="0" font-weight="normal" textLength="79.0" lengthAdjust="spacing"  fill="#3c3c3c" stroke="#3c3c3c" stroke-width="0.3">Seawolf Pkwy</text>
<path d="M473.0,406.4 L626.4,369.9 L653.9,474.4 L679.5,483.4 L655.6,615.5 L629.0,607.2 L632.4,586.3 L612.4,584.0 L617.4,597.3 L614.1,603.9 L599.2,599.9 L597.5,607.2 L561.7,598.3 L562.7,592.3 L519.5,594.9 L506.2,588.3 L473.0,436.3Z" fill="rgba(0,0,0,0.14)" stroke="#3c3c3c" stroke-width="1" stroke-linejoin="miter"/>
<circle cx="571.1" cy="526.8" r="19.9" fill="#474747"/>
<g fill="none" stroke="#fff" stroke-width="1.35" stroke-linejoin="round" stroke-linecap="butt">
<path d="M561.3,522.6 L561.3,520.9 L571,517.1 L580.7,520.9 L580.7,522.6 Z"/>
<path d="M564.6,522.6 V533 M568.9,522.6 V533 M573.2,522.6 V533 M577.5,522.6 V533"/>
<path d="M563.6,533 L578.4,533 L580.7,534.6 L580.7,536.7 L561.3,536.7 L561.3,534.6 Z"/>
</g>
<text x="892.2" y="254.0" transform="rotate(0.0 892.2 254.0)" font-size="13.4" text-anchor="middle" dominant-baseline="central" letter-spacing="0" font-weight="normal" textLength="116.4" lengthAdjust="spacing"  fill="#fff" stroke="#fff" stroke-width="2.5" stroke-linejoin="round">PELICAN ISLAND</text>
<text x="892.2" y="254.0" transform="rotate(0.0 892.2 254.0)" font-size="13.4" text-anchor="middle" dominant-baseline="central" letter-spacing="0" font-weight="normal" textLength="116.4" lengthAdjust="spacing"  fill="#2f3136" stroke="#2f3136" stroke-width="0.12">PELICAN ISLAND</text>
<text x="470.3" y="659.7" transform="rotate(-60.9 470.3 659.7)" font-size="12.6" text-anchor="middle" dominant-baseline="central" letter-spacing="0" font-weight="normal" textLength="139.0" lengthAdjust="spacing"  fill="#fff" stroke="#fff" stroke-width="3" stroke-linejoin="round">Pelican Island Causeway</text>
<text x="470.3" y="659.7" transform="rotate(-60.9 470.3 659.7)" font-size="12.6" text-anchor="middle" dominant-baseline="central" letter-spacing="0" font-weight="normal" textLength="139.0" lengthAdjust="spacing"  fill="#3c3c3c" stroke="#3c3c3c" stroke-width="0.3">Pelican Island Causeway</text>
<text x="386.9" y="838.3" transform="rotate(94.2 386.9 838.3)" font-size="12.6" text-anchor="start" dominant-baseline="central" letter-spacing="0" font-weight="normal"  fill="#fff" stroke="#fff" stroke-width="3" stroke-linejoin="round">Pelican Island Causeway</text>
<text x="386.9" y="838.3" transform="rotate(94.2 386.9 838.3)" font-size="12.6" text-anchor="start" dominant-baseline="central" letter-spacing="0" font-weight="normal"  fill="#3c3c3c" stroke="#3c3c3c" stroke-width="0.3">Pelican Island Causeway</text>
<text x="732.0" y="854.2" transform="rotate(-16.1 732.0 854.2)" font-size="11.3" text-anchor="middle" dominant-baseline="central" letter-spacing="0" font-weight="normal" textLength="84.5" lengthAdjust="spacing"  fill="#fff" stroke="#fff" stroke-width="3" stroke-linejoin="round">Port Industrial Rd</text>
<text x="732.0" y="854.2" transform="rotate(-16.1 732.0 854.2)" font-size="11.3" text-anchor="middle" dominant-baseline="central" letter-spacing="0" font-weight="normal" textLength="84.5" lengthAdjust="spacing"  fill="#4d4d4d" stroke="#4d4d4d" stroke-width="0.3">Port Industrial Rd</text>
<text x="728.9" y="884.0" transform="rotate(-21.5 728.9 884.0)" font-size="14" text-anchor="middle" dominant-baseline="central" letter-spacing="0" font-weight="normal" textLength="77.5" lengthAdjust="spacing"  fill="#fff" stroke="#fff" stroke-width="3" stroke-linejoin="round">Harborside Dr</text>
<text x="728.9" y="884.0" transform="rotate(-21.5 728.9 884.0)" font-size="14" text-anchor="middle" dominant-baseline="central" letter-spacing="0" font-weight="normal" textLength="77.5" lengthAdjust="spacing"  fill="#2a2a2a" stroke="#2a2a2a" stroke-width="0.3">Harborside Dr</text>
<text x="848.0" y="870.0" transform="rotate(-16.7 848.0 870.0)" font-size="11.3" text-anchor="middle" dominant-baseline="central" letter-spacing="0" font-weight="normal" textLength="60.3" lengthAdjust="spacing"  fill="#fff" stroke="#fff" stroke-width="3" stroke-linejoin="round">Mechanic St</text>
<text x="848.0" y="870.0" transform="rotate(-16.7 848.0 870.0)" font-size="11.3" text-anchor="middle" dominant-baseline="central" letter-spacing="0" font-weight="normal" textLength="60.3" lengthAdjust="spacing"  fill="#4d4d4d" stroke="#4d4d4d" stroke-width="0.3">Mechanic St</text>
<text x="926.8" y="872.5" transform="rotate(-15.9 926.8 872.5)" font-size="11.3" text-anchor="middle" dominant-baseline="central" letter-spacing="0" font-weight="normal" textLength="48.0" lengthAdjust="spacing"  fill="#fff" stroke="#fff" stroke-width="3" stroke-linejoin="round">Market St</text>
<text x="926.8" y="872.5" transform="rotate(-15.9 926.8 872.5)" font-size="11.3" text-anchor="middle" dominant-baseline="central" letter-spacing="0" font-weight="normal" textLength="48.0" lengthAdjust="spacing"  fill="#4d4d4d" stroke="#4d4d4d" stroke-width="0.3">Market St</text>
<text x="889.5" y="868.2" transform="rotate(73.6 889.5 868.2)" font-size="13.4" text-anchor="start" dominant-baseline="central" letter-spacing="0" font-weight="normal"  fill="#fff" stroke="#fff" stroke-width="3" stroke-linejoin="round">33rd St</text>
<text x="889.5" y="868.2" transform="rotate(73.6 889.5 868.2)" font-size="13.4" text-anchor="start" dominant-baseline="central" letter-spacing="0" font-weight="normal"  fill="#2a2a2a" stroke="#2a2a2a" stroke-width="0.3">33rd St</text>
<text x="775.6" y="877.2" transform="rotate(69.0 775.6 877.2)" font-size="11.3" text-anchor="start" dominant-baseline="central" letter-spacing="0" font-weight="normal"  fill="#fff" stroke="#fff" stroke-width="3" stroke-linejoin="round">37th St</text>
<text x="775.6" y="877.2" transform="rotate(69.0 775.6 877.2)" font-size="11.3" text-anchor="start" dominant-baseline="central" letter-spacing="0" font-weight="normal"  fill="#4d4d4d" stroke="#4d4d4d" stroke-width="0.3">37th St</text>
<text x="993.0" y="827.5" transform="rotate(69.9 993.0 827.5)" font-size="11.3" text-anchor="middle" dominant-baseline="central" letter-spacing="0" font-weight="normal" textLength="35.5" lengthAdjust="spacing"  fill="#fff" stroke="#fff" stroke-width="3" stroke-linejoin="round">29th St</text>
<text x="993.0" y="827.5" transform="rotate(69.9 993.0 827.5)" font-size="11.3" text-anchor="middle" dominant-baseline="central" letter-spacing="0" font-weight="normal" textLength="35.5" lengthAdjust="spacing"  fill="#4d4d4d" stroke="#4d4d4d" stroke-width="0.3">29th St</text>
<text x="1014.5" y="799.3" transform="rotate(69.9 1014.5 799.3)" font-size="11.3" text-anchor="middle" dominant-baseline="central" letter-spacing="0" font-weight="normal" textLength="35.5" lengthAdjust="spacing"  fill="#fff" stroke="#fff" stroke-width="3" stroke-linejoin="round">28th St</text>
<text x="1014.5" y="799.3" transform="rotate(69.9 1014.5 799.3)" font-size="11.3" text-anchor="middle" dominant-baseline="central" letter-spacing="0" font-weight="normal" textLength="35.5" lengthAdjust="spacing"  fill="#4d4d4d" stroke="#4d4d4d" stroke-width="0.3">28th St</text>
<text x="1076.6" y="816.2" transform="rotate(69.9 1076.6 816.2)" font-size="11.3" text-anchor="middle" dominant-baseline="central" letter-spacing="0" font-weight="normal" textLength="35.5" lengthAdjust="spacing"  fill="#fff" stroke="#fff" stroke-width="3" stroke-linejoin="round">26th St</text>
<text x="1076.6" y="816.2" transform="rotate(69.9 1076.6 816.2)" font-size="11.3" text-anchor="middle" dominant-baseline="central" letter-spacing="0" font-weight="normal" textLength="35.5" lengthAdjust="spacing"  fill="#4d4d4d" stroke="#4d4d4d" stroke-width="0.3">26th St</text>
<text x="1093.5" y="778.4" transform="rotate(69.5 1093.5 778.4)" font-size="13.8" text-anchor="middle" dominant-baseline="central" letter-spacing="0" font-weight="normal" textLength="41.5" lengthAdjust="spacing"  fill="#fff" stroke="#fff" stroke-width="3" stroke-linejoin="round">25th St</text>
<text x="1093.5" y="778.4" transform="rotate(69.5 1093.5 778.4)" font-size="13.8" text-anchor="middle" dominant-baseline="central" letter-spacing="0" font-weight="normal" textLength="41.5" lengthAdjust="spacing"  fill="#2a2a2a" stroke="#2a2a2a" stroke-width="0.3">25th St</text>
<text x="1122.3" y="765.4" transform="rotate(68.0 1122.3 765.4)" font-size="11.3" text-anchor="middle" dominant-baseline="central" letter-spacing="0" font-weight="normal" textLength="35.5" lengthAdjust="spacing"  fill="#fff" stroke="#fff" stroke-width="3" stroke-linejoin="round">24th St</text>
<text x="1122.3" y="765.4" transform="rotate(68.0 1122.3 765.4)" font-size="11.3" text-anchor="middle" dominant-baseline="central" letter-spacing="0" font-weight="normal" textLength="35.5" lengthAdjust="spacing"  fill="#4d4d4d" stroke="#4d4d4d" stroke-width="0.3">24th St</text>
<text x="1119.5" y="817.5" transform="rotate(-17.0 1119.5 817.5)" font-size="11.3" text-anchor="start" dominant-baseline="central" letter-spacing="0" font-weight="normal"  fill="#fff" stroke="#fff" stroke-width="3" stroke-linejoin="round">Market St</text>
<text x="1119.5" y="817.5" transform="rotate(-17.0 1119.5 817.5)" font-size="11.3" text-anchor="start" dominant-baseline="central" letter-spacing="0" font-weight="normal"  fill="#4d4d4d" stroke="#4d4d4d" stroke-width="0.3">Market St</text>
<text x="1133.0" y="862.0" transform="rotate(-17.0 1133.0 862.0)" font-size="11.3" text-anchor="start" dominant-baseline="central" letter-spacing="0" font-weight="normal"  fill="#fff" stroke="#fff" stroke-width="3" stroke-linejoin="round">Church St</text>
<text x="1133.0" y="862.0" transform="rotate(-17.0 1133.0 862.0)" font-size="11.3" text-anchor="start" dominant-baseline="central" letter-spacing="0" font-weight="normal"  fill="#4d4d4d" stroke="#4d4d4d" stroke-width="0.3">Church St</text>
<circle cx="972.2" cy="800" r="9.3" fill="#fff" stroke="#333" stroke-width="1.1"/>
<text x="972.2" y="800.2" font-size="8.8" text-anchor="middle" dominant-baseline="central" fill="#333">275</text>
<text x="9.4" y="897.7" font-size="19.5" fill="#5c5c5c" stroke="#5c5c5c" stroke-width="2.7" stroke-linejoin="round" textLength="55.6" lengthAdjust="spacingAndGlyphs">Google</text>
<text x="9.4" y="897.7" font-size="19.5" fill="#fff" stroke="#fff" stroke-width="0.7" stroke-linejoin="round" textLength="55.6" lengthAdjust="spacingAndGlyphs">Google</text>
<rect x="794.5" y="892.7" width="95.5" height="12" fill="#f5f5f5" fill-opacity="0.72"/>
<rect x="895.7" y="892.7" width="109.0" height="12" fill="#f5f5f5" fill-opacity="0.72"/>
<rect x="1006" y="892.7" width="40" height="12" fill="#f5f5f5" fill-opacity="0.72"/>
<rect x="1046" y="892.7" width="95" height="12" fill="#f5f5f5" fill-opacity="0.72"/>
<text x="799.3" y="901.5" font-size="10" fill="#000" stroke="#000" stroke-width="0.2" textLength="86.4" lengthAdjust="spacing">Keyboard shortcuts</text>
<text x="898.2" y="901.5" font-size="10" fill="#000" stroke="#000" stroke-width="0.2" textLength="101.7" lengthAdjust="spacing">Map data ©2026 INEGI</text>
<text x="1013" y="901.5" font-size="10" fill="#000" stroke="#000" stroke-width="0.2" textLength="27" lengthAdjust="spacing">Terms</text>
<text x="1052.4" y="901.5" font-size="10" fill="#000" stroke="#000" stroke-width="0.2" textLength="83.1" lengthAdjust="spacing">Report a map error</text>
</svg>
</div>
<div id="mapshade" class="abs"></div>
<!-- map controls -->
<div class="abs mbtn" style="left:7px;top:156px;width:124px;height:48px"></div>
<div class="t mtxt" style="left:48px;top:171.8px;letter-spacing:0.2px">Map Tools</div>
<div class="abs mbtn" style="left:7px;top:206px;width:92px;height:40px"></div>
<div class="t mtxt" style="left:47px;top:218.3px;letter-spacing:-0.5px">Draw</div>
<div class="abs zbtn" style="left:1082.5px;top:164.3px"></div>
<div class="abs zbtn" style="left:1082.5px;top:216.2px"></div>
<svg class="abs" style="left:0;top:148px" width="1142" height="120" viewBox="0 148 1142 120">
 <g fill="#6b6b6b">
  <path d="M28.4,168 L40.8,174 L28.4,180 L16,174 Z"/>
  <path d="M16,179.3 L19.6,177.6 L28.4,181.9 L37.2,177.6 L40.8,179.3 L28.4,185.4 Z"/>
  <path d="M16,184.7 L19.6,183 L28.4,187.3 L37.2,183 L40.8,184.7 L28.4,190.8 Z"/>
 </g>
 <g fill="none" stroke="#666" stroke-width="1.2" stroke-linejoin="round" stroke-linecap="round">
  <path d="M19.2,229.5 L31.6,217.6 A2.4,2.4 0 0 1 35.3,221 L23.2,233.2 L18.6,234.2 Z"/>
  <path d="M30,219.2 L33.7,222.8"/>
  <path d="M18.6,234.2 C24,235.5 28,232.5 31,233.2 C33,233.7 34,234.8 35,235.2"/>
 </g>
 <g stroke="#222" stroke-width="2" fill="none">
  <path d="M1097,185.8 H1111 M1104,178.8 V192.8"/>
  <path d="M1097,237.7 H1111"/>
 </g>
</svg>
<!-- right panel -->
<div id="panel" class="abs"></div>
<svg class="abs" style="left:1144px;top:902px" width="761" height="2" viewBox="1144 902 761 2">
 <rect x="1158" y="902.3" width="32" height="2" fill="#1d1d1f"/><rect x="1192" y="902.3" width="61" height="2" fill="#232325"/>
 <rect x="1253" y="902.3" width="37" height="2" fill="#8e99a3"/><rect x="1290" y="902.3" width="225" height="2" fill="#b9a58f"/>
 <rect x="1533" y="902.3" width="354" height="2" fill="#5d6040"/>
</svg>
<!-- header -->
<div id="hdrline" class="abs"></div>
<svg class="abs" style="left:0;top:0" width="1903" height="97" viewBox="0 0 1903 97" font-family="'Liberation Serif',serif">
 <g fill="#4a4a4a"><rect x="30.2" y="35.3" width="38.7" height="4.1"/><rect x="30.2" y="45.9" width="38.7" height="4.1"/><rect x="30.2" y="56.6" width="38.7" height="4.1"/></g>
 <rect x="107.4" y="24.2" width="44.4" height="44.4" fill="#500000"/>
 <g fill="#fff" font-weight="bold" text-anchor="middle" font-family="'DejaVu Serif','Liberation Serif',serif">
  <text x="129.6" y="60" font-size="37" textLength="25.5" lengthAdjust="spacingAndGlyphs">T</text>
  <g stroke="#500000" stroke-width="2.4" stroke-linejoin="miter">
  <text x="119.8" y="53.7" font-size="16" textLength="13.6" lengthAdjust="spacingAndGlyphs">A</text>
  <text x="139.6" y="53.7" font-size="16" textLength="13.2" lengthAdjust="spacingAndGlyphs">M</text>
  </g>
  <g stroke="#fff" stroke-width="0.7" stroke-linejoin="miter">
  <text x="119.8" y="53.7" font-size="16" textLength="13.6" lengthAdjust="spacingAndGlyphs">A</text>
  <text x="139.6" y="53.7" font-size="16" textLength="13.2" lengthAdjust="spacingAndGlyphs">M</text>
  </g>
 </g>
 <rect x="152.6" y="67.2" width="1.4" height="0.9" fill="#7a2a2a"/>
 <!--APT-->
 <g transform="translate(1713.2,51)">
  <g fill="#69b345">
   <path d="M-8.1,-7.1 L-1.65,-12.1 L2.8,-9.1 L-0.2,-4.7 Z"/>
   <path d="M4,-10.1 L11.3,-5 L9.9,0.8 L4.8,-2 Z"/>
   <path d="M11.7,1.3 L9.2,7.7 L4,9.2 L4.3,3.6 Z"/>
   <path d="M-6.6,6.5 L-2.1,5.3 L3,11.2 L-4.6,11.7 Z"/>
   <path d="M-11.9,-1.7 L-8.1,-4.4 L-4.6,0.3 L-8.1,5.7 Z"/>
  </g>
 </g>
</svg>
<div id="sl" class="t">Student Life</div>
<div id="dsa" class="t">DIVISION OF STUDENT AFFAIRS</div>
<div class="abs vsep" style="left:356px"></div>
<div class="t nav" style="left:373px;letter-spacing:1.19px">Housing</div>
<div class="abs vsep" style="left:463px"></div>
<div class="t nav" style="left:480px;letter-spacing:1.18px">Roommates</div>
<div class="abs vsep" style="left:602px"></div>
<div class="t nav" style="left:619.5px;letter-spacing:0.85px">Resources</div>
<div class="abs vsep" style="left:729px"></div>
<div class="t nav" style="left:746px;letter-spacing:1.06px">Add a Listing</div>
<div class="t nav" style="left:1503.5px;top:38.9px;letter-spacing:0.84px">Sign In / Sign Up</div>
<div class="abs" style="left:1676px;top:32px;width:1px;height:30px;background:#333"></div>
<div class="t" style="left:1778px;top:32.9px;font-size:10.9px;color:#333;letter-spacing:0.36px">In partnership with</div>
<div class="t" style="left:1729px;top:42.9px;font-size:21.8px;color:#1f1f1f;font-family:'Liberation Serif',serif;letter-spacing:0.05px">Apartments.com<span style="font-size:4px;vertical-align:7px;letter-spacing:0;font-family:'Liberation Sans',sans-serif">TM</span></div>
<!-- filter -->
<div id="fline" class="abs"></div>
<div class="t flab" style="left:7.4px;letter-spacing:-0.03px">TAMU Galveston</div>
<div class="abs fsep" style="left:331px"></div>
<div class="t flab" style="left:340.5px;letter-spacing:-0.3px">Price</div>
<div class="abs fsep" style="left:525px"></div>
<div class="t flab" style="left:533.5px;letter-spacing:-0.04px">Pricing Type</div>
<div class="abs fsep" style="left:718px"></div>
<div class="t flab" style="left:727px;letter-spacing:-0.29px">Beds &amp; Baths</div>
<div class="abs fsep" style="left:928px"></div>
<div class="t flab" style="left:936.5px;letter-spacing:-0.09px">Building Type</div>
<div class="abs fsep" style="left:1137px"></div>
<div class="t flab" style="left:1146.5px;top:114.4px;letter-spacing:-0.17px">More</div>
<div class="abs fsep" style="left:1331px"></div>
<div class="abs fsep" style="left:1903px"></div>
<div class="abs fbtn" style="left:1349px;width:60px"></div>
<div class="t flab" style="left:1360px;top:115.3px;color:#cfcfcf;letter-spacing:-0.5px">Clear</div>
<div class="abs fbtn" style="left:1827px;width:60px"></div>
<div class="t flab" style="left:1866.5px;top:115.3px;color:#cfcfcf">0</div>
<svg class="abs" style="left:0;top:98px" width="1903" height="49" viewBox="0 98 1903 49">
 <g fill="none" stroke="#333" stroke-width="1.7" stroke-linecap="butt">
  <path d="M306.2,116.2 L318.3,127.6 M318.3,116.2 L306.2,127.6"/>
  <path d="M500,119.3 L505.2,124.6 L510.4,119.3"/>
  <path d="M692.7,119.3 L697.9,124.6 L703.1,119.3"/>
  <path d="M902.8,119.3 L908,124.6 L913.2,119.3"/>
  <path d="M1111.6,119.3 L1116.8,124.6 L1122,119.3"/>
  <path d="M1305.5,120.3 L1310.7,125.6 L1315.9,120.3"/>
 </g>
 <path d="M1850,130.8 C1846,127.2 1841.3,123.6 1841.3,119.4 C1841.3,116.6 1843.4,114.6 1846,114.6 C1847.6,114.6 1849.1,115.4 1850,116.8 C1850.9,115.4 1852.4,114.6 1854,114.6 C1856.6,114.6 1858.7,116.6 1858.7,119.4 C1858.7,123.6 1854,127.2 1850,130.8 Z" fill="none" stroke="#111" stroke-width="1.5" stroke-linejoin="round"/>
</svg>
<!-- scrollbar -->
<div id="sb" class="abs"></div>
<svg class="abs" style="left:1903px;top:0" width="15" height="904" viewBox="1903 0 15 904">
 <rect x="1903" y="0" width="2" height="97" fill="#fff"/>
 <rect x="1907" y="11.8" width="9.2" height="127" rx="4.6" fill="#8b8b8b"/>
 <path d="M1907,5.6 L1911.6,-1.5 L1916.2,5.6 Z" fill="#8b8b8b" stroke="#8b8b8b" stroke-width="0.8" stroke-linejoin="round"/>
 <path d="M1907.2,894.6 L1916,894.6 L1911.6,900.6 Z" fill="#8b8b8b" stroke="#8b8b8b" stroke-width="0.8" stroke-linejoin="round"/>
</svg>
</div>
</body>
</html>
